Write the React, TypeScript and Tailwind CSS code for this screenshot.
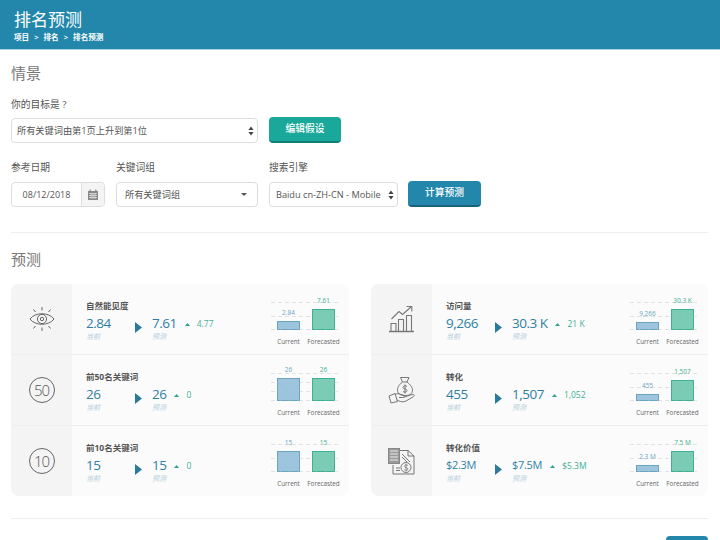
import React from 'react';

const FONT = "font-['Open_Sans','Noto_Sans_CJK_SC',sans-serif]";

const UpDown = () => (
  <svg width="6" height="10" viewBox="0 0 6 10" className="shrink-0">
    <path d="M3 0.5 L5.6 4 H0.4 Z M3 9.5 L5.6 6 H0.4 Z" fill="#444" />
  </svg>
);

const EyeIcon = () => (
  <svg width="26" height="26" viewBox="0 0 26 26" fill="none" stroke="#666" strokeWidth="1">
    <path d="M1 13 C6 6 20 6 25 13 C20 20 6 20 1 13 Z" />
    <circle cx="13" cy="13" r="4.6" />
    <circle cx="13" cy="13" r="1.7" />
    <path d="M13 1 V4.5 M13 21.5 V25 M4.5 3.5 L6.5 6 M21.5 3.5 L19.5 6 M4.5 22.5 L6.5 20 M21.5 22.5 L19.5 20" />
  </svg>
);

const CircleNum = ({ n }: { n: string }) => (
  <div className="w-[26px] h-[26px] rounded-full border border-[#666] flex items-center justify-center text-[15px] font-light tracking-[-1px] text-[#555] leading-none">
    {n}
  </div>
);

const GrowthIcon = () => (
  <svg width="27" height="28" viewBox="0 0 27 28" fill="none" stroke="#777" strokeWidth="1.1">
    <path d="M1 26.5 H26" strokeWidth="1.4" />
    <path d="M3 26 V18.5 H8 V26 M10.5 26 V14.5 H15.5 V26 M18.5 26 V10.5 H23.5 V26" />
    <path d="M3.5 14 L11 6.5 L14.5 9.5 L23 2" />
    <path d="M18.5 1.5 H23.8 V6.5" />
  </svg>
);

const MoneyIcon = () => (
  <svg width="28" height="28" viewBox="0 0 28 28" fill="none" stroke="#777" strokeWidth="1">
    <path d="M14.5 6 L12.5 1.5 H21 L19 6 Z" />
    <path d="M14.5 6 C10.5 9 9.5 12 9.5 14 C9.5 18 12.5 19.5 17 19.5 C21.5 19.5 24.5 18 24.5 14 C24.5 12 23 9 19 6" />
    <path d="M19 10.5 C18 9.5 15 9.5 15 11.5 C15 13.5 19 12.5 19 14.5 C19 16.5 16 16.5 15 15.5 M17 8.5 V17.5" />
    <path d="M1 20 L7 17.5 L9.5 25.5 L3 27 Z" />
    <path d="M7 18.5 C10 16.5 12 18.5 15 19 C17 19.5 17 21.5 14.5 21.5 H11 M15 21.5 L24 18.5 C26.5 18 27 19.5 25 21 L17 25.5 C14 26.5 11 25 8.8 24" />
  </svg>
);

const CalcIcon = () => (
  <svg width="27" height="27" viewBox="0 0 27 27" fill="none" stroke="#777" strokeWidth="1">
    <rect x="0.5" y="0.5" width="11" height="15" fill="#999" stroke="#888" />
    <path d="M2 3 H10 M2 6 H10 M2 9 H10 M2 12 H10" stroke="#eee" strokeWidth="1" />
    <path d="M12 2.5 H20 L26 8 V26 H5 V17" />
    <path d="M20 2.5 V8 H26 M14 6 L22 14 M14 9 L19 14" />
    <path d="M8 20 H12 M8 22.5 H12" />
    <circle cx="18" cy="19.5" r="5" />
    <path d="M20 17.5 C19 16.5 16.5 16.7 16.5 18.4 C16.5 20 20 19.3 20 21 C20 22.5 17.3 22.7 16.2 21.6 M18 15.8 V23.4" strokeWidth="0.8" />
  </svg>
);

type ChartProps = {
  cur: string;
  fore: string;
  curH: number;
  foreH: number;
  gridStep?: number;
};

// mini bar chart, plot baseline sits at y=40.5 in the svg
const MiniChart = ({ cur, fore, curH, foreH, gridStep = 13.5 }: ChartProps) => {
  const base = 40.5;
  const lines: number[] = [];
  for (let y = base; y >= base - 27; y -= gridStep) lines.push(Math.round(y - 0.5) + 0.5);
  return (
    <svg width="74" height="62" viewBox="0 0 74 62" className="shrink-0">
      {lines.map((y) => (
        <line key={y} x1="2" x2="70" y1={y} y2={y} stroke="#e2e2e2" strokeWidth="1" strokeDasharray="4 3" />
      ))}
      <rect x="8.5" y={base - curH} width="22" height={curH} fill="#9cc4dc" stroke="#6ba5c2" strokeWidth="1" />
      <rect x="43.5" y={base - foreH} width="22" height={foreH} fill="#7accb4" stroke="#3fb094" strokeWidth="1" />
      {lines.map((y) => (
        <line key={y} x1="2" x2="70" y1={y} y2={y} stroke="#e2e2e2" strokeOpacity="0.3" strokeWidth="1" strokeDasharray="1 8" />
      ))}
      <text x="19.5" y={base - curH - 6.5} textAnchor="middle" fontSize="6.5" fill="#6ba5c2">{cur}</text>
      <text x="54.5" y={base - foreH - 6.5} textAnchor="middle" fontSize="6.5" fill="#3fb094">{fore}</text>
      <text x="19.5" y="55" textAnchor="middle" fontSize="6.3" fill="#666">Current</text>
      <text x="54.5" y="55" textAnchor="middle" fontSize="6.3" fill="#666">Forecasted</text>
    </svg>
  );
};

type RowProps = ChartProps & {
  icon: React.ReactNode;
  title: string;
  current: string;
  forecast: string;
  delta: string;
  small?: boolean;
  last?: boolean;
};

const MetricRow = ({ icon, title, current, forecast, delta, small, last, ...chart }: RowProps) => (
  <div className={`flex ${last ? 'h-[70px]' : 'h-[71px] border-b border-[#eeeeee]'}`}>
    <div className="w-[61px] shrink-0 bg-[#f4f4f4] flex items-center justify-center">{icon}</div>
    <div className="flex-1 flex items-start pl-[14px] pr-[6px] pt-[15px]">
      <div className="flex-1">
        <div className="text-[8.5px] font-bold text-[#555] leading-[14px]">{title}</div>
        <div className="flex mt-[1px]">
          <div className="w-[49px]">
            <div className={`${small ? 'text-[11px] tracking-[-0.3px]' : 'text-[13.5px] tracking-[-0.5px]'} text-[#2f7fa3] leading-[18px]`}>{current}</div>
            <div className="text-[7px] italic text-[#b4cfdc] leading-[10px]">当前</div>
          </div>
          <div className="w-[17px] pt-[8px]">
            <svg width="7" height="11" viewBox="0 0 7 11">
              <path d="M0 0 L7 5.5 L0 11 Z" fill="#2a7a9b" />
            </svg>
          </div>
          <div className="mr-[8px]">
            <div className={`${small ? 'text-[11px] tracking-[-0.3px]' : 'text-[13.5px] tracking-[-0.5px]'} text-[#2f7fa3] leading-[18px] whitespace-nowrap`}>{forecast}</div>
            <div className="text-[7px] italic text-[#b4cfdc] leading-[10px]">预测</div>
          </div>
          <div className="flex items-center h-[18px] mt-[1px]">
            <svg width="5" height="3" viewBox="0 0 5 3" className="mr-[7px]">
              <path d="M2.5 0 L5 3 H0 Z" fill="#2aa48c" />
            </svg>
            <span className="text-[8.5px] text-[#3fb094] whitespace-nowrap">{delta}</span>
          </div>
        </div>
      </div>
      <div className="-mt-[10px]">
        <MiniChart {...chart} />
      </div>
    </div>
  </div>
);

const SelectBox = ({ text, w, pad, children }: { text: string; w: string; pad: string; children: React.ReactNode }) => (
  <div className={`${w} ${pad} h-[25px] bg-white border border-[#dddddd] rounded-[4px] flex items-center justify-between pr-[3px] text-[9.2px] text-[#555]`}>
    <span className="whitespace-nowrap">{text}</span>
    {children}
  </div>
);

const Label = ({ children }: { children: React.ReactNode }) => (
  <div className="text-[9.75px] text-[#555] leading-[14px] mb-[7px]">{children}</div>
);

export default function App() {
  return (
    <div className={`${FONT} w-[720px] h-[540px] overflow-hidden bg-white`}>
      <header className="h-[50px] bg-[#2387ab] border-b border-[#a9d3e2] pl-[14px] pt-[9px] text-white">
        <h1 className="text-[17px] leading-[22px]">排名预测</h1>
        <div className="flex gap-[5px] text-[7.6px] font-semibold leading-[10px] mt-[1px]">
          <span>项目</span>
          <span>&gt;</span>
          <span>排名</span>
          <span>&gt;</span>
          <span>排名预测</span>
        </div>
      </header>

      <main className="pl-[11px] pr-[12px]">
        <h2 className="text-[15px] text-[#777] leading-[20px] mt-[13px]">情景</h2>

        <div className="mt-[15px]">
          <Label>你的目标是&nbsp;?</Label>
          <div className="flex items-start -mt-[1px]">
            <SelectBox text="所有关键词由第1页上升到第1位" w="w-[247px]" pad="pl-[5px]">
              <UpDown />
            </SelectBox>
            <button className="ml-[11px] -mt-[1px] w-[72px] h-[26px] rounded-[4px] bg-[#1aa89a] border-b-2 border-[#0f7f75] text-white text-[9.75px] font-medium">
              编辑假设
            </button>
          </div>
        </div>

        <div className="flex items-end mt-[18px]">
          <div className="w-[105px]">
            <Label>参考日期</Label>
            <div className="w-[94px] h-[25px] flex border border-[#dddddd] rounded-[4px] text-[9px] text-[#555]">
              <div className="flex-1 flex items-center justify-center">08/12/2018</div>
              <div className="w-[23px] bg-[#f4f4f4] border-l border-[#dddddd] rounded-r-[4px] flex items-center justify-center">
                <svg width="10" height="11" viewBox="0 0 10 11">
                  <path d="M0 2 H10 V11 H0 Z" fill="#888" />
                  <path d="M2.2 0.5 V3 M7.8 0.5 V3" stroke="#888" strokeWidth="1.2" />
                  <path d="M1 4.5 H9 M1 6.5 H9 M1 8.5 H9 M3 4 V10 M5 4 V10 M7 4 V10" stroke="#f4f4f4" strokeWidth="0.6" />
                </svg>
              </div>
            </div>
          </div>
          <div className="w-[153px]">
            <Label>关键词组</Label>
            <SelectBox text="所有关键词组" w="w-[142px]" pad="pl-[8px]">
              <svg width="6" height="3" viewBox="0 0 6 3" className="mr-[7px]">
                <path d="M0 0 H6 L3 3 Z" fill="#555" />
              </svg>
            </SelectBox>
          </div>
          <div className="w-[139px]">
            <Label>搜索引擎</Label>
            <SelectBox text="Baidu cn-ZH-CN - Mobile" w="w-[129px]" pad="pl-[6px]">
              <UpDown />
            </SelectBox>
          </div>
          <button className="w-[73px] h-[26px] rounded-[4px] bg-[#2387ab] border-b-2 border-[#17627f] text-white text-[9.75px] font-medium">
            计算预测
          </button>
        </div>

        <hr className="border-[#eeeeee] mt-[25px]" />

        <h2 className="text-[15px] text-[#777] leading-[20px] mt-[16px]">预测</h2>

        <div className="flex gap-[22px] mt-[15px]">
          <div className="w-[338px] rounded-[8px] overflow-hidden bg-[#fbfbfb]">
            <MetricRow icon={<EyeIcon />} title="自然能见度" current="2.84" forecast="7.61" delta="4.77" cur="2.84" fore="7.61" curH={8} foreH={20} />
            <MetricRow icon={<CircleNum n="50" />} title="前50名关键词" current="26" forecast="26" delta="0" cur="26" fore="26" curH={22} foreH={22} gridStep={9} />
            <MetricRow icon={<CircleNum n="10" />} title="前10名关键词" current="15" forecast="15" delta="0" cur="15" fore="15" curH={20} foreH={20} last />
          </div>
          <div className="w-[337px] rounded-[8px] overflow-hidden bg-[#fbfbfb]">
            <MetricRow icon={<GrowthIcon />} title="访问量" current="9,266" forecast="30.3 K" delta="21 K" cur="9,266" fore="30.3 K" curH={7} foreH={20} />
            <MetricRow icon={<MoneyIcon />} title="转化" current="455" forecast="1,507" delta="1,052" cur="455" fore="1,507" curH={6} foreH={20} />
            <MetricRow icon={<CalcIcon />} title="转化价值" current="$2.3M" forecast="$7.5M" delta="$5.3M" small cur="2.3 M" fore="7.5 M" curH={6} foreH={20} last />
          </div>
        </div>

        <hr className="border-[#eeeeee] mt-[22px]" />

        <div className="flex justify-between items-start mt-[17px]">
          <h2 className="text-[15px] text-[#777] leading-[20px] mt-[1px]">关键词组</h2>
          <div className="w-[42px] h-[26px] rounded-[4px] bg-[#2387ab]" />
        </div>
      </main>
    </div>
  );
}
